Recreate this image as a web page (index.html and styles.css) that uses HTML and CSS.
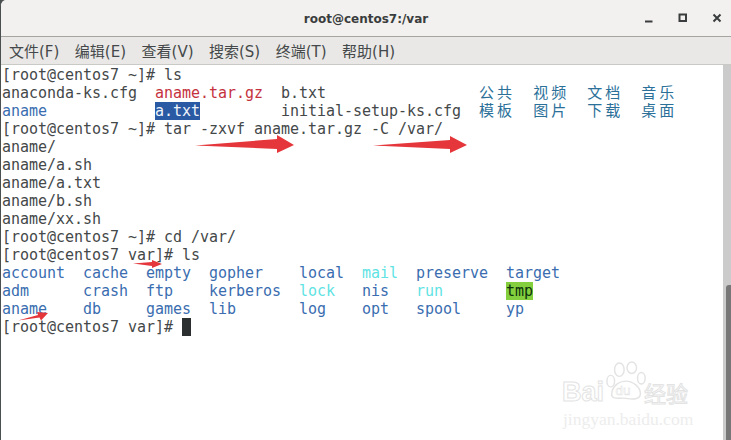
FILE: index.html
```html
<!DOCTYPE html>
<html lang="zh">
<head>
<meta charset="utf-8">
<title>root@centos7:/var</title>
<link rel="stylesheet" href="styles.css">
</head>
<body>
<div class="window">
  <header class="titlebar">
    <div class="title">root@centos7:/var</div>
    <div class="controls">
      <svg class="ctl" viewBox="0 0 10 10"><path d="M1 8.500h7.500" /></svg>
      <svg class="ctl" viewBox="0 0 10 10"><rect x="1.500" y="1.500" width="6.500" height="6.500" /></svg>
      <svg class="ctl" viewBox="0 0 10 10"><path d="M1.500 1.500l7 7M8.500 1.500l-7 7" /></svg>
    </div>
  </header>
  <nav class="menubar">
    <span>文件(F)</span><span>编辑(E)</span><span>查看(V)</span><span>搜索(S)</span><span>终端(T)</span><span>帮助(H)</span>
  </nav>
  <main class="body">
    <div class="term">
      <div class="row">[root@centos7 ~]# ls</div>
      <div class="row">anaconda-ks.cfg  <span class="red">aname.tar.gz</span>  b.txt                 <span class="cn">公共</span>  <span class="cn">视频</span>  <span class="cn">文档</span>  <span class="cn">音乐</span></div>
      <div class="row"><span class="blue">aname</span>            <span class="sel">a.txt</span>         initial-setup-ks.cfg  <span class="cn">模板</span>  <span class="cn">图片</span>  <span class="cn">下载</span>  <span class="cn">桌面</span></div>
      <div class="row">[root@centos7 ~]# tar -zxvf aname.tar.gz -C /var/</div>
      <div class="row">aname/</div>
      <div class="row">aname/a.sh</div>
      <div class="row">aname/a.txt</div>
      <div class="row">aname/b.sh</div>
      <div class="row">aname/xx.sh</div>
      <div class="row">[root@centos7 ~]# cd /var/</div>
      <div class="row">[root@centos7 var]# ls</div>
      <div class="row"><span class="blue">account  cache  empty  gopher    local  </span><span class="cyan">mail</span><span class="blue">  preserve  target</span></div>
      <div class="row"><span class="blue">adm      crash  ftp    kerberos  </span><span class="cyan">lock</span><span class="blue">   nis   </span><span class="cyan">run</span>       <span class="tmp">tmp</span></div>
      <div class="row"><span class="blue">aname    db     games  lib       log    opt   spool     yp</span></div>
      <div class="row">[root@centos7 var]# <span class="cursor"> </span></div>
    </div>
    <div class="scrollbar"><div class="thumb"></div></div>

    <svg class="arrows" viewBox="0 0 731 375">
      <path d="M195 80.500L277 74V70L294 80L277 88V84Z" />
      <path d="M373 80.500L450 75V71L467 80L450 88V84Z" />
      <path d="M133 198.500L152 197V195L162 199L152 203V201Z" />
      <path d="M18 255.500L38 250L37 247L48 248L41 255.500L39.500 252.500Z" />
    </svg>

    <div class="mark">
      <div class="mark-top">
        <span class="mark-bai">Bai</span>
        <svg class="paw" viewBox="0 0 46 46">
          <ellipse cx="6" cy="20" rx="4" ry="6" />
          <ellipse cx="15" cy="8" rx="5" ry="7" />
          <ellipse cx="28" cy="6" rx="5" ry="6" />
          <ellipse cx="38" cy="17" rx="4" ry="6" />
          <path d="M7 34c0-9 8-14 15-14s15 6 15 13c0 7-9 6-15 5s-15 2-15-4Z" />
          <text x="11" y="34" class="paw-du">du</text>
        </svg>
        <span class="mark-cn">经验</span>
      </div>
      <div class="mark-url">jingyan.baidu.com</div>
    </div>
  </main>
</div>
</body>
</html>
```
FILE: styles.css
```css
* { box-sizing: border-box; }
html, body { margin: 0; padding: 0; background: #4a4f50; }
.window {
  width: 731px;
  height: 440px;
  display: flex;
  flex-direction: column;
  overflow: hidden;
  border-left: 1px solid #4a4f50;
  border-top-left-radius: 6px;
  background: #fff;
}
.titlebar {
  height: 37px;
  flex: none;
  display: flex;
  align-items: center;
  justify-content: center;
  position: relative;
  background: #f2f1ef;
  border-bottom: 1px solid #a5a5a2;
}
.title {
  font: bold 12px "DejaVu Sans", "Liberation Sans", sans-serif;
  color: #3a3d3d;
  padding-top: 1px;
}
.controls {
  position: absolute;
  top: 13px;
  right: 9px;
  display: flex;
  gap: 24px;
}
.ctl { width: 10px; height: 10px; fill: none; stroke: #3a3d3d; stroke-width: 2; }
.menubar {
  height: 28px;
  flex: none;
  display: flex;
  align-items: center;
  gap: 15.500px;
  padding-left: 8px;
  background: #e9e8e6;
  border-bottom: 1px solid #c9c9c6;
  font: 15px "DejaVu Sans", "Noto Sans CJK SC", sans-serif;
  color: #45484a;
}
.menubar span { white-space: nowrap; }
.body {
  flex: 1;
  min-height: 0;
  position: relative;
  display: flex;
}
.term {
  flex: 1;
  padding: 1px 0 0 1px;
  font: 15px/18px "DejaVu Sans Mono", "Noto Sans CJK SC", monospace;
  letter-spacing: -0.03px;
  color: #444849;
}
.row { height: 18px; white-space: pre; }
.blue { color: #3a6db0; }
.red { color: #c5323e; }
.cyan { color: #5fe3e3; }
.cn { color: #2a7099; letter-spacing: 3.03px; }
.sel { background: #2a5aa3; color: #eef3fa; display: inline-block; }
.tmp { background: #83cf3e; color: #0c330c; display: inline-block; }
.cursor { background: #2b2f30; display: inline-block; }
.scrollbar {
  width: 8px;
  flex: none;
  background: #cbcbcb;
  display: flex;
  flex-direction: column;
  justify-content: flex-end;
  align-items: flex-end;
}
.thumb { width: 5px; height: 155px; background: #777; border-radius: 3px 0 0 0; }
.arrows {
  position: absolute;
  left: -1px;
  top: 0;
  width: 731px;
  height: 375px;
  fill: #e5363b;
  pointer-events: none;
}
.mark {
  position: absolute;
  left: 561px;
  top: 296px;
  width: 134px;
  color: #fff;
}
.mark-top { display: flex; align-items: flex-start; height: 47px; }
.mark-bai {
  font: bold 27px/1 "Liberation Sans", sans-serif;
  -webkit-text-stroke: 1px #e3e3e3;
  margin-top: 18px;
  margin-right: 1px;
}
.paw { width: 44px; height: 46px; flex: none; fill: #fff; stroke: #e3e3e3; stroke-width: 1.500; }
.paw-du { font: 14px "Liberation Sans", sans-serif; stroke: #dedede; stroke-width: .5; }
.mark-cn {
  font: 22px/1 "Noto Sans CJK SC", sans-serif;
  -webkit-text-stroke: 1px #e3e3e3;
  margin: 20px 0 0 -5px;
  white-space: nowrap;
}
.mark-url {
  font: 17.500px/1 "Liberation Serif", serif;
  color: #ededed;
  white-space: nowrap;
  margin-top: 3px;
  padding-left: 1px;
}
```
